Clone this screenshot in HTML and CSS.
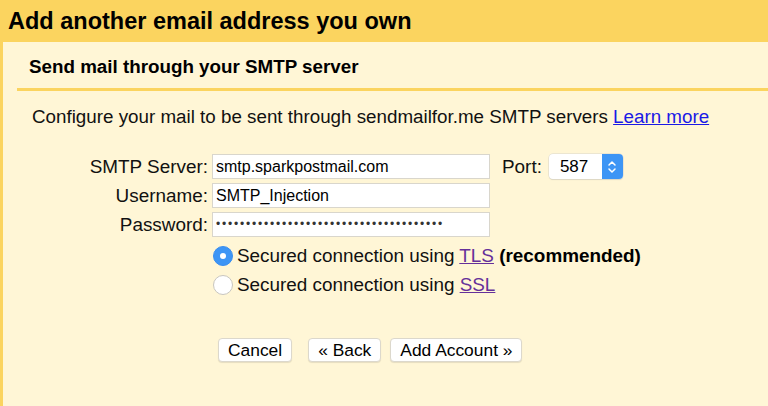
FILE: index.html
```html
<!DOCTYPE html>
<html>
<head>
<meta charset="utf-8">
<link rel="stylesheet" href="styles.css">
</head>
<body>
<div class="header"><h1 class="title">Add another email address you own</h1></div>
<div class="panel">
  <h2 class="subtitle">Send mail through your SMTP server</h2>
  <div class="rule"></div>
  <p class="intro">Configure your mail to be sent through sendmailfor.me SMTP servers <a class="learn" href="#">Learn more</a></p>
  <div class="form">
    <div class="row">
      <span class="lbl">SMTP Server:</span>
      <span class="field">smtp.sparkpostmail.com</span>
      <span class="port-lbl">Port:</span>
      <span class="select"><span class="select-val">587</span><span class="select-btn"><svg width="10" height="16" viewBox="0 0 10 16"><path d="M2 6 L5 3 L8 6 M2 10 L5 13 L8 10" fill="none" stroke="#fff" stroke-width="1.5" stroke-linecap="round" stroke-linejoin="round"/></svg></span></span>
    </div>
    <div class="row">
      <span class="lbl">Username:</span>
      <span class="field">SMTP_Injection</span>
    </div>
    <div class="row">
      <span class="lbl">Password:</span>
      <span class="field pw">••••••••••••••••••••••••••••••••••••••</span>
    </div>
    <div class="radios">
      <div class="radio-row"><span class="radio on"><span class="dot"></span></span><span class="rtext">Secured connection using <a class="v" href="#">TLS</a> <b>(recommended)</b></span></div>
      <div class="radio-row"><span class="radio"></span><span class="rtext">Secured connection using <a class="v" href="#">SSL</a></span></div>
    </div>
    <div class="buttons">
      <span class="btn">Cancel</span>
      <span class="btn back">« Back</span>
      <span class="btn">Add Account »</span>
    </div>
  </div>
</div>
</body>
</html>
```
FILE: styles.css
```css
html, body { margin: 0; padding: 0; }
body {
  width: 768px;
  height: 406px;
  overflow: hidden;
  background: #fff6d6;
  font-family: "Liberation Sans", Arial, sans-serif;
  color: #111;
}
.header {
  background: #fbd45f;
  height: 42px;
  padding-left: 8px;
  display: flex;
  align-items: center;
}
.title {
  margin: 0;
  font-size: 23.5px;
  font-weight: bold;
  color: #000;
  line-height: 28px;
}
.panel {
  border-left: 3px solid #fbd45f;
  height: 364px;
  box-sizing: border-box;
}
.subtitle {
  margin: 0;
  padding: 13px 0 0 26px;
  height: 33px;
  font-size: 18.8px;
  font-weight: bold;
  color: #000;
  line-height: 24px;
}
.rule {
  margin: 0 0 0 14px;
  height: 3px;
  background: #fbd45f;
}
.intro {
  margin: 0;
  padding: 14px 0 0 29px;
  font-size: 18.8px;
  line-height: 24px;
}
.learn { color: #1a1ae6; }
.form { margin-top: 25px; }
.row {
  display: flex;
  align-items: center;
  height: 25px;
  margin-bottom: 4px;
  font-size: 18.9px;
}
.lbl {
  width: 209px;
  text-align: right;
  padding-right: 4px;
  box-sizing: border-box;
}
.field {
  width: 278px;
  height: 25px;
  box-sizing: border-box;
  background: #fff;
  border: 1px solid #d9d6cc;
  font-size: 16px;
  line-height: 23px;
  padding-left: 3px;
  color: #000;
}
.pw { font-size: 12px; letter-spacing: 1.8px; line-height: 22px; color: #333; }
.port-lbl { margin-left: 12px; }
.select {
  margin-left: 7px;
  width: 74px;
  height: 25px;
  display: flex;
  border-radius: 4px;
  background: #fff;
  box-shadow: 0 0 0 0.5px #d9d6cc, 0 1px 1px rgba(0,0,0,0.12);
  overflow: hidden;
}
.select-val {
  flex: 1;
  padding-left: 11px;
  line-height: 25px;
  font-size: 17px;
  color: #000;
}
.select-btn {
  width: 21px;
  background: #3d95f5;
  display: flex;
  align-items: center;
  justify-content: center;
}
.radios { margin-top: 2px; padding-left: 210px; }
.radio-row {
  display: flex;
  align-items: center;
  height: 29px;
  font-size: 18.9px;
}
.radio {
  width: 20px;
  height: 20px;
  border-radius: 50%;
  box-sizing: border-box;
  border: 1px solid #c8c6c0;
  background: #fff;
  margin-right: 4px;
  display: flex;
  align-items: center;
  justify-content: center;
}
.radio.on { background: #3d95f5; border-color: #3a8ef0; }
.dot { width: 6px; height: 6px; border-radius: 50%; background: #fff; }
.v { color: #65309a; }
.rtext b { color: #000; }
.buttons {
  display: flex;
  margin-top: 39px;
  padding-left: 215px;
}
.btn {
  height: 24px;
  box-sizing: border-box;
  padding: 0 9px;
  line-height: 22px;
  font-size: 17.4px;
  background: #fff;
  border: 1px solid #dcd8cc;
  border-radius: 4px;
  box-shadow: 0 1px 1px rgba(0,0,0,0.1);
  color: #000;
  margin-right: 9px;
}
.btn:first-child { margin-right: 16px; }
```
